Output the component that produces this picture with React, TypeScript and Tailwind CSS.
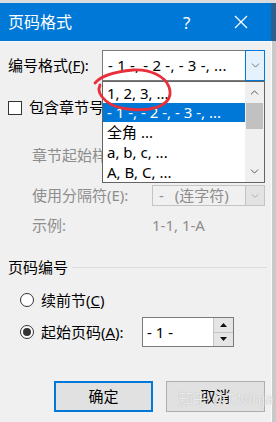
import { ChevronDown, ChevronUp } from 'lucide-react';

const font = { fontFamily: '"Noto Sans", "Noto Sans CJK SC", sans-serif' };

export default function App() {
    return (
        <div className="relative w-[276px] h-[422px] overflow-hidden bg-[#d9d9d9] text-[15px] text-black" style={font}>
            {/* Top strip from the window behind */}
            <div className="h-[3px] bg-[#dcdcdc]" />
            <div className="flex">
                <div className="w-[271px] flex flex-col">
                    {/* Title bar */}
                    <div className="h-[38px] bg-[#0078d7] flex items-center text-white">
                        <span className="pl-[8px] text-[16px] leading-none">页码格式</span>
                        <span className="ml-[111px] text-[17px] leading-none">?</span>
                        <svg width="14" height="14" viewBox="0 0 14 14" className="ml-[44px]">
                            <path d="M1 1 L13 13 M13 1 L1 13" stroke="white" strokeWidth="1.3" />
                        </svg>
                    </div>
                    <Body />
                </div>
                <div className="w-[5px] flex flex-col">
                    <div className="h-[38px] bg-[#2f5f8f]" />
                    <div className="flex-1 bg-[#c9c9c9] border-l border-[#fafafa]" />
                </div>
            </div>
        </div>
    );
}

function Body() {
    return (
        <div className="relative h-[381px] bg-[#f0f0f0] border-t border-[#f7f7f7]">
            {/* 编号格式 */}
            <div className="mt-[8px] h-[31px] flex items-center">
                <span className="pl-[8px] w-[102px]">编号格式(<u>F</u>):</span>
                <div className="w-[163px] h-[31px] flex border border-[#7a7a7a] bg-white">
                    <span className="flex-1 pl-[5px] leading-[29px] whitespace-nowrap tracking-[0.2px]">- 1 -, - 2 -, - 3 -, ...</span>
                    <div className="w-[20px] -my-px -mr-px bg-[#e5f1fb] border border-[#0078d7] flex items-center justify-center">
                        <ChevronDown size={13} strokeWidth={1.2} className="text-[#333]" />
                    </div>
                </div>
            </div>

            {/* 包含章节号 */}
            <div className="mt-[17px] h-[19px] flex items-center pl-[8px]">
                <div className="w-[14px] h-[14px] border border-[#333] bg-white" />
                <span className="ml-[7px]">包含章节号(<u>N</u>)</span>
            </div>

            <div className="mt-[28px] h-[20px] flex items-center pl-[32px] text-[#8d8d8d]">
                <span>章节起始样式(P):</span>
            </div>

            <div className="mt-[20px] h-[21px] flex items-center text-[#8d8d8d]">
                <span className="pl-[32px] w-[152px]">使用分隔符(E):</span>
                <div className="w-[113px] h-[21px] flex border border-[#c4c4c4] bg-[#f0f0f0]">
                    <span className="flex-1 pl-[6px] leading-[19px] whitespace-nowrap">
                        -<span className="pl-[11px]">(连字符)</span>
                    </span>
                    <div className="w-[20px] -my-px -mr-px bg-[#e3e3e3] border border-[#c4c4c4] flex items-center justify-center">
                        <ChevronDown size={12} strokeWidth={1.2} className="text-[#8d8d8d]" />
                    </div>
                </div>
            </div>

            <div className="mt-[9px] h-[20px] flex items-center text-[#8d8d8d]">
                <span className="pl-[32px] w-[152px]">示例:</span>
                <span>1-1, 1-A</span>
            </div>

            {/* 页码编号 */}
            <div className="mt-[22px] h-[20px] flex items-center pl-[8px]">
                <span>页码编号</span>
                <div className="ml-[4px] flex-1 mr-[4px] h-px bg-[#dcdcdc]" />
            </div>

            <div className="mt-[13px] h-[20px] flex items-center pl-[20px]">
                <div className="w-[14px] h-[14px] rounded-full border border-[#333] bg-white" />
                <span className="ml-[7px]">续前节(<u>C</u>)</span>
            </div>

            <div className="mt-[7px] h-[30px] flex items-center">
                <div className="pl-[20px] w-[142px] flex items-center">
                    <div className="w-[14px] h-[14px] rounded-full border border-[#333] bg-white flex items-center justify-center">
                        <div className="w-[8px] h-[8px] rounded-full bg-[#333]" />
                    </div>
                    <span className="ml-[7px]">起始页码(<u>A</u>):</span>
                </div>
                <div className="w-[92px] h-[30px] flex border border-[#7a7a7a] bg-white">
                    <span className="flex-1 pl-[4px] leading-[28px]">- 1 -</span>
                    <div className="w-[20px] flex flex-col">
                        <div className="flex-1 bg-[#e5e5e5] border-l border-b border-[#c4c4c4] flex items-center justify-center">
                            <svg width="7" height="4" viewBox="0 0 7 4"><path d="M0 4 L3.5 0 L7 4 Z" fill="#111" /></svg>
                        </div>
                        <div className="flex-1 bg-[#e5e5e5] border-l border-[#c4c4c4] flex items-center justify-center">
                            <svg width="7" height="4" viewBox="0 0 7 4"><path d="M0 0 L3.5 4 L7 0 Z" fill="#111" /></svg>
                        </div>
                    </div>
                </div>
            </div>

            {/* Buttons */}
            <div className="mt-[34px] flex pl-[54px] gap-[13px]">
                <button className="w-[99px] h-[31px] bg-[#e1e1e1] border-2 border-[#0078d7]">确定</button>
                <button className="w-[99px] h-[31px] bg-[#e1e1e1] border border-[#adadad]">取消</button>
            </div>

            {/* Watermark */}
            <span
                className="absolute left-[178px] top-[345px] text-[15px] text-white/80 whitespace-nowrap"
                style={{ textShadow: '0 0 1px #9a9a9a' }}
            >
                知乎 @T.Ninja
            </span>

            {/* Open dropdown list */}
            <div className="absolute left-[102px] top-[39px] w-[163px] h-[102px] bg-white border border-[#646464] flex">
                <div className="flex-1 flex flex-col pt-[1px]">
                    <div className="h-[20px] pl-[4px] leading-[20px]">1, 2, 3, ...</div>
                    <div className="h-[19px] pl-[4px] leading-[19px] bg-[#0078d7] text-white whitespace-nowrap">- 1 -, - 2 -, - 3 -, ...</div>
                    <div className="h-[20px] pl-[4px] leading-[20px]">全角 ...</div>
                    <div className="h-[20px] pl-[4px] leading-[20px]">a, b, c, ...</div>
                    <div className="h-[20px] pl-[4px] leading-[20px]">A, B, C, ...</div>
                </div>
                <div className="w-[19px] bg-[#f0f0f0] flex flex-col items-center">
                    <ChevronUp size={13} strokeWidth={1.8} className="mt-[4px] text-[#555]" />
                    <div className="mt-[4px] w-[17px] h-[26px] bg-[#c1c1c1]" />
                    <ChevronDown size={13} strokeWidth={1.8} className="mt-auto mb-[4px] text-[#555]" />
                </div>
            </div>

            {/* Red hand-drawn circle */}
            <svg className="absolute left-0 top-0 pointer-events-none" width="271" height="120" viewBox="0 41 271 120">
                <path
                    d="M95 82 C100 76 112 71 133 69 C150 68 165 75 169 86 C173 97 166 105 150 108 C135 110 115 108 106 100 C99 94 98 88 100 84"
                    fill="none"
                    stroke="#e8303c"
                    strokeWidth="2.8"
                    strokeLinecap="round"
                />
            </svg>
        </div>
    );
}
